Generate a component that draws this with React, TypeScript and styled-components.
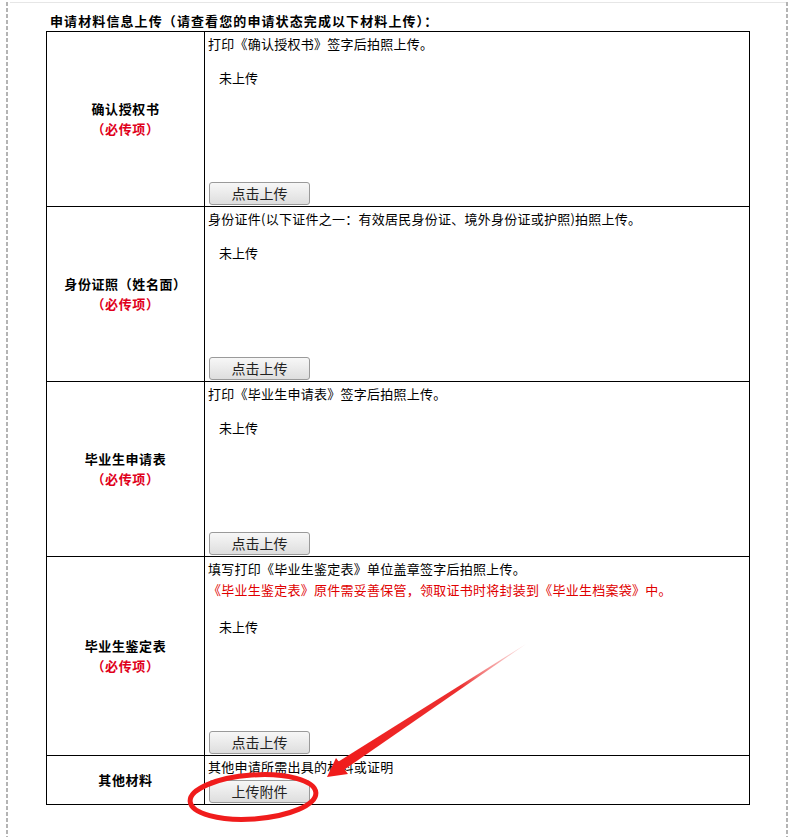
import React from "react";
import styled, { createGlobalStyle } from "styled-components";

const GlobalStyle = createGlobalStyle`
    html, body {
        margin: 0;
        padding: 0;
        background: #ffffff;
    }
    body {
        font-family: "Noto Sans CJK SC", "Liberation Sans", sans-serif;
        font-size: 13px;
        color: #000000;
    }
`;

interface Material {
    title: string;
    required: boolean;
    lines: string[];
    note?: string;
}

const materials: Material[] = [
    {
        title: "确认授权书",
        required: true,
        lines: ["打印《确认授权书》签字后拍照上传。"],
    },
    {
        title: "身份证照（姓名面）",
        required: true,
        lines: ["身份证件(以下证件之一：有效居民身份证、境外身份证或护照)拍照上传。"],
    },
    {
        title: "毕业生申请表",
        required: true,
        lines: ["打印《毕业生申请表》签字后拍照上传。"],
    },
    {
        title: "毕业生鉴定表",
        required: true,
        lines: ["填写打印《毕业生鉴定表》单位盖章签字后拍照上传。"],
        note: "《毕业生鉴定表》原件需妥善保管，领取证书时将封装到《毕业生档案袋》中。",
    },
];

const App = () => {
    return (
        <>
            <GlobalStyle />
            <Frame>
                <Inner>
                    <Heading>申请材料信息上传（请查看您的申请状态完成以下材料上传）：</Heading>
                    <Table>
                        <tbody>
                            {materials.map((m) => (
                                <tr key={m.title}>
                                    <LabelCell>
                                        <Label>{m.title}</Label>
                                        {m.required && <Required>（必传项）</Required>}
                                    </LabelCell>
                                    <ContentCell>
                                        <Body>
                                            {m.lines.map((l) => (
                                                <Line key={l}>{l}</Line>
                                            ))}
                                            {m.note && <Note>{m.note}</Note>}
                                            <Status>未上传</Status>
                                            <UploadButton type="button">点击上传</UploadButton>
                                        </Body>
                                    </ContentCell>
                                </tr>
                            ))}
                            <tr>
                                <LabelCell>
                                    <Label>其他材料</Label>
                                </LabelCell>
                                <ContentCell>
                                    <OtherBody>
                                        <OtherLine>其他申请所需出具的材料或证明</OtherLine>
                                        <UploadButton type="button">上传附件</UploadButton>
                                    </OtherBody>
                                </ContentCell>
                            </tr>
                        </tbody>
                    </Table>
                </Inner>
                <Annotation width="796" height="837" viewBox="0 0 796 837">
                    <defs>
                        <linearGradient id="shaft" x1="526" y1="642" x2="340" y2="765" gradientUnits="userSpaceOnUse">
                            <stop offset="0" stopColor="#f4a0a0" stopOpacity="0.3" />
                            <stop offset="0.35" stopColor="#ec3030" />
                            <stop offset="1" stopColor="#f01c1c" />
                        </linearGradient>
                    </defs>
                    <polygon points="526,642 343,768.5 337,760.5" fill="url(#shaft)" />
                    <polygon points="327,775 348,772 336,756" fill="#f01c1c" />
                    <ellipse
                        cx="253"
                        cy="795"
                        rx="63"
                        ry="22"
                        fill="none"
                        stroke="#f01c1c"
                        strokeWidth="5"
                        transform="rotate(-4 253 795)"
                    />
                </Annotation>
            </Frame>
        </>
    );
};

const Frame = styled.div`
    position: relative;
    box-sizing: border-box;
    width: 796px;
    min-height: 837px;
    padding: 0 10px;
    background-image: repeating-linear-gradient(to bottom, #b4b4b4 0 4px, transparent 4px 6px),
        repeating-linear-gradient(to bottom, #b4b4b4 0 4px, transparent 4px 6px);
    background-size: 2px 100%, 2px 100%;
    background-position: 6px 0, 786px 0;
    background-repeat: no-repeat;
`;

const Inner = styled.div`
    margin-top: 2px;
    border-top: 1px solid #e6e6e6;
    width: 776px;
    padding-left: 36px;
    box-sizing: border-box;
`;

const Heading = styled.div`
    padding: 8px 0 0 4px;
    height: 20px;
    line-height: 20px;
    font-weight: bold;
    font-size: 13px;
    letter-spacing: 1.1px;
    white-space: nowrap;
`;

const Table = styled.table`
    border-collapse: collapse;
    width: 704px;
    table-layout: fixed;
`;

const LabelCell = styled.td`
    width: 157px;
    border: 1px solid #000000;
    text-align: center;
    vertical-align: middle;
    padding: 0;
`;

const Label = styled.div`
    font-weight: bold;
    font-size: 13px;
    line-height: 20px;
    letter-spacing: 0.6px;
`;

const Required = styled(Label)`
    color: #e0001b;
`;

const ContentCell = styled.td`
    border: 1px solid #000000;
    vertical-align: top;
    padding: 0 3px 1px 3px;
`;

const Body = styled.div`
    display: flex;
    flex-direction: column;
    align-items: flex-start;
    padding-top: 2px;
`;

const Line = styled.div`
    line-height: 20px;
    white-space: nowrap;
    letter-spacing: 0.25px;
`;

const Note = styled(Line)`
    color: #e00000;
    margin: 1px 0 3px;
`;

const Status = styled.div`
    line-height: 20px;
    height: 114px;
    margin-top: 14px;
    padding-left: 11px;
`;

const OtherBody = styled.div`
    display: flex;
    flex-direction: column;
    align-items: flex-start;
    padding-top: 1px;
`;

const OtherLine = styled(Line)`
    margin-bottom: 3px;
`;

const UploadButton = styled.button`
    box-sizing: border-box;
    width: 101px;
    height: 23px;
    margin: 0 0 0 1px;
    padding: 0;
    border: 1px solid #9a9a9a;
    border-radius: 3px;
    background: linear-gradient(to bottom, #f7f7f7, #dedede);
    font-family: "Noto Sans CJK SC", "Liberation Sans", sans-serif;
    font-size: 14px;
    line-height: 21px;
    color: #222222;
`;

const Annotation = styled.svg`
    position: absolute;
    top: 0;
    left: 0;
    pointer-events: none;
`;

export default App;
